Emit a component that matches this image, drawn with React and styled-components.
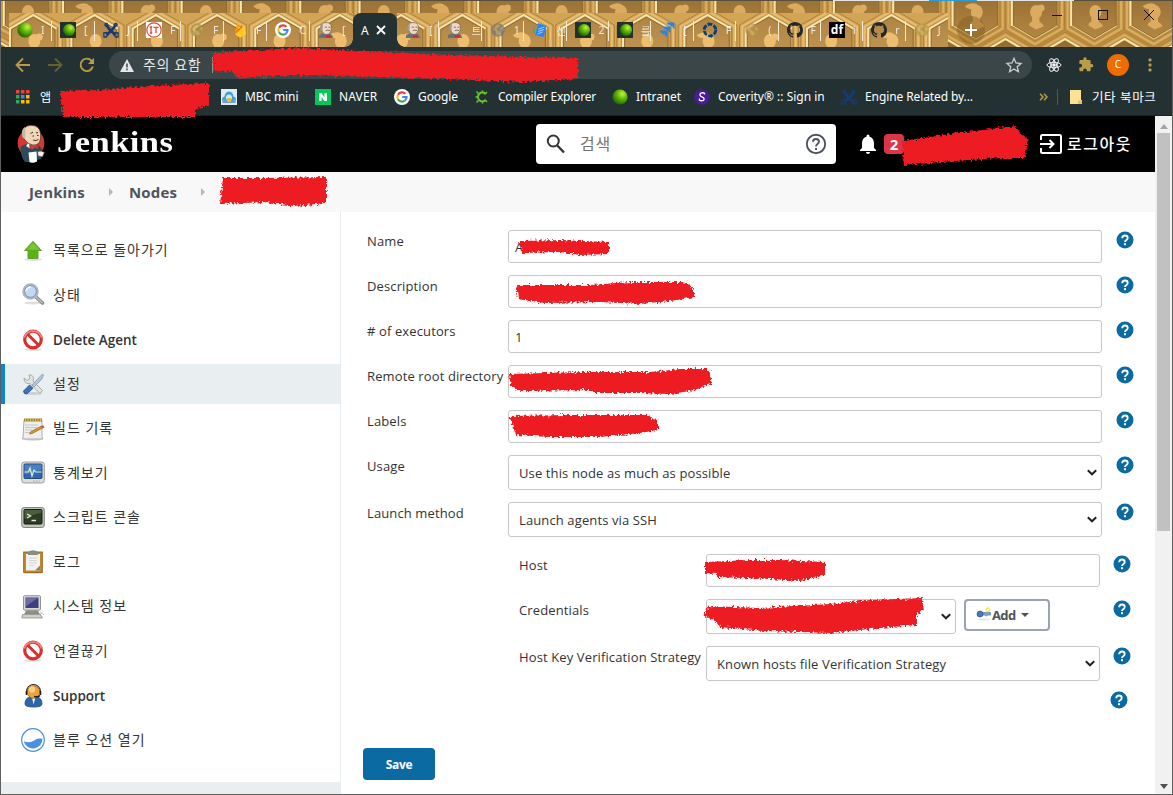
import React from "react";
import styled, { createGlobalStyle } from "styled-components";

const UI = `"Open Sans", "Noto Sans CJK KR", sans-serif`;
const CHROME = `"Noto Sans", "Noto Sans CJK KR", sans-serif`;

const Global = createGlobalStyle`
  * { box-sizing: border-box; }
  body { margin: 0; background: #fff; font-family: ${UI}; color: #333; overflow: hidden; }
  svg { display: block; flex: none; }
`;

const Window = styled.div`
  position: relative;
  width: 1173px;
  height: 795px;
  display: flex;
  flex-direction: column;
  overflow: hidden;
  border: 1px solid #5f5f5f;
  border-top: 0;
  background: #fff;
`;

/* ---------- browser frame ---------- */
const Frame = styled.div`
  position: relative;
  height: 47px;
  flex: none;
  display: flex;
  align-items: flex-end;
  padding-left: 8px;
`;
const FrameArt = styled.svg`
  position: absolute;
  inset: 0;
`;
const TopEdge = styled.div`
  position: absolute;
  left: 0;
  right: 0;
  top: 0;
  height: 1px;
  background: linear-gradient(90deg, #57503f 832px, #e4e4e4 832px 928px, #2e9bd0 928px 976px, #e4e4e4 976px 1073px, #57503f 1073px);
`;
const TabGroup = styled.div`
  position: relative;
  display: flex;
  flex: none;
  width: ${(p) => p.$w}px;
  height: 34px;
  z-index: 1;
`;
const TabBox = styled.div`
  position: relative;
  flex: 1 1 0;
  min-width: 0;
  display: flex;
  align-items: center;
  padding-left: 8px;
  gap: 8px;
  &::after {
    content: "";
    position: absolute;
    right: 0;
    top: 8px;
    width: 1px;
    height: 20px;
    background: ${(p) => (p.$last ? "transparent" : "#f6ecd6")};
  }
`;
const TabArt = styled.svg`
  position: absolute;
  left: 0;
  top: 0;
`;
const TabIcon = styled.span`
  position: relative;
  flex: none;
  opacity: ${(p) => (p.$dim ? 0.75 : 1)};
`;
const TabLetter = styled.span`
  font: 10.5px ${CHROME};
  color: #fff;
  opacity: 0.8;
`;
const ActiveTab = styled.div`
  position: relative;
  z-index: 2;
  flex: none;
  width: 44px;
  height: 34px;
  background: #243133;
  border-radius: 8px 8px 0 0;
  display: flex;
  align-items: center;
  gap: 7px;
  padding-left: 8px;
  color: #fff;
  font: 12px ${CHROME};
  &::before, &::after {
    content: "";
    position: absolute;
    bottom: 0;
    width: 8px;
    height: 8px;
  }
  &::before { left: -8px; background: radial-gradient(circle at 0 0, transparent 7.5px, #243133 8px); }
  &::after { right: -8px; background: radial-gradient(circle at 100% 0, transparent 7.5px, #243133 8px); }
`;
const NewTab = styled.div`
  position: relative;
  z-index: 1;
  width: 28px;
  height: 28px;
  margin: 0 0 3px 9px;
  border-radius: 50%;
  background: rgba(130, 92, 30, 0.45);
  display: grid;
  place-items: center;
`;
const Caption = styled.div`
  position: relative;
  z-index: 1;
  align-self: flex-start;
  display: flex;
  margin: 10px 18px 0 auto;
  gap: 36px;
`;

const Toolbar = styled.div`
  flex: none;
  height: 36px;
  background: #243133;
  display: flex;
  align-items: center;
  padding: 0 0 0 14px;
`;
const NavIcons = styled.div`
  display: flex;
  flex: none;
  gap: 16px;
  width: 94px;
`;
const Omnibox = styled.div`
  width: 923px;
  flex: none;
  height: 28px;
  border-radius: 14px;
  background: #3b4648;
  display: flex;
  align-items: center;
  padding: 0 9px 0 11px;
  color: #e6e8e8;
  font: 14px ${UI};
  letter-spacing: 0.6px;
  span { margin: -2px 0 0 9px; width: 62px; white-space: nowrap; }
  i { width: 1px; height: 16px; margin-left: 7px; background: #8c9394; }
  svg:last-child { margin-left: auto; }
`;
const Actions = styled.div`
  display: grid;
  grid-template-columns: repeat(4, 32px);
  justify-items: center;
  align-items: center;
  margin-left: 6px;
`;
const Avatar = styled.span`
  width: 22px;
  height: 22px;
  border-radius: 50%;
  background: #ef6c00;
  color: #fff;
  font: 10px/21px ${CHROME};
  text-align: center;
`;
const Bookmarks = styled.div`
  flex: none;
  height: 33px;
  background: #243133;
  border-bottom: 1px solid #1a2224;
  display: flex;
  align-items: center;
  padding: 0 0 5px 15px;
  font: 12px ${CHROME};
  color: #fff;
`;
const Bookmark = styled.div`
  width: ${(p) => p.$w}px;
  flex: none;
  display: flex;
  align-items: center;
  gap: ${(p) => p.$gap || 8}px;
  white-space: nowrap;
  font-size: ${(p) => p.$fs || 12}px;
  letter-spacing: ${(p) => p.$ls || 0}px;
`;
const Divider = styled.span`
  width: 1px;
  height: 16px;
  margin: 0 11px 0 9px;
  background: #5f5a3c;
`;

/* ---------- page ---------- */
const Viewport = styled.div`
  flex: 1;
  display: flex;
  min-height: 0;
`;
const Page = styled.div`
  flex: 1;
  min-width: 0;
  display: flex;
  flex-direction: column;
`;
const Header = styled.header`
  height: 56px;
  flex: none;
  background: #000;
  display: flex;
  align-items: center;
  padding: 0 23px 0 16px;
  color: #fff;
`;
const Brand = styled.span`
  margin: -4px 0 0 11px;
  width: 479px;
  font: bold 30px "Liberation Serif", serif;
  letter-spacing: 0.4px;
  span { display: inline-block; transform: scaleX(1.15); transform-origin: 0 50%; }
`;
const Search = styled.div`
  width: 300px;
  height: 40px;
  background: #fff;
  border-radius: 4px;
  display: flex;
  align-items: center;
  padding: 0 8px;
  color: #757575;
  font-size: 16px;
  letter-spacing: 0.9px;
  span { flex: 1; margin: -2px 0 0 12px; }
`;
const Alerts = styled.div`
  display: flex;
  align-items: center;
  gap: 4px;
  margin-left: 20px;
`;
const Badge = styled.span`
  width: 20px;
  height: 20px;
  border-radius: 4px;
  background: #dc3545;
  font: bold 15px/20px ${UI};
  text-align: center;
`;
const Logout = styled.span`
  display: flex;
  align-items: center;
  gap: 5px;
  margin-left: auto;
  font-size: 16px;
  font-weight: 500;
  letter-spacing: 1.5px;
  span { margin-top: -3px; }
`;
const Crumbs = styled.nav`
  height: 40px;
  flex: none;
  background: #f8f8f8;
  display: flex;
  align-items: center;
  padding: 0 0 1px 28px;
  color: #4d545d;
  font: bold 15px ${UI};
`;
const Crumb = styled.span`
  width: ${(p) => p.$w}px;
  letter-spacing: 0.15px;
`;
const Arrow = styled.span`
  width: 0;
  height: 0;
  border: 4px solid transparent;
  border-left-color: #b5b8bb;
  border-right-width: 0;
  margin-right: ${(p) => p.$mr}px;
`;
const Body = styled.div`
  flex: 1;
  display: flex;
  min-height: 0;
`;
const Side = styled.aside`
  width: 340px;
  flex: none;
  border-right: 1px solid #e6ecef;
  display: flex;
  flex-direction: column;
  padding-top: 18.5px;
`;
const Task = styled.div`
  height: 40px;
  margin-bottom: 4.5px;
  flex: none;
  display: flex;
  align-items: center;
  gap: 8px;
  padding-left: 16px;
  border-left: 4px solid ${(p) => (p.$on ? "#0b87d1" : "transparent")};
  background: ${(p) => (p.$on ? "#e9eef1" : "transparent")};
  font-size: ${(p) => (p.$latin ? 13.5 : 14)}px;
  font-weight: ${(p) => (p.$latin ? 600 : 400)};
  letter-spacing: ${(p) => (p.$latin ? 0 : 1)}px;
  span { padding: ${(p) => (p.$latin ? "1px 0 0" : "0 0 3px")}; }
`;
const SideFoot = styled.div`
  margin-top: auto;
  height: 12px;
  flex: none;
  background: #e9eef1;
`;
const Form = styled.main`
  flex: 1;
  padding: 18px 0 0 26px;
`;
const Row = styled.div`
  display: grid;
  grid-template-columns: ${(p) => (p.$nested ? "187px 394px 31px" : "141px 594px 32px")};
  justify-content: start;
  margin: ${(p) => p.$mt || 0}px 0 12px ${(p) => (p.$nested ? 152 : 0)}px;
  & > svg { margin: 1px 0 0 auto; }
`;
const Label = styled.label`
  padding-top: 2px;
  font-size: 13px;
  line-height: 18px;
  white-space: nowrap;
  letter-spacing: 0.12px;
`;
const Field = styled.div`
  height: ${(p) => (p.$select ? 35 : 33)}px;
  width: ${(p) => (p.$w ? p.$w + "px" : "auto")};
  border: 1px solid #c6c6c6;
  border-radius: 3px;
  background: #fff;
  display: flex;
  align-items: center;
  justify-content: space-between;
  padding: 1px ${(p) => (p.$select ? "3px 0 10px" : "6px 0 6px")};
  font-size: 13px;
  letter-spacing: 0.12px;
`;
const Inline = styled.div`
  display: flex;
  gap: 8px;
`;
const AddButton = styled.button`
  width: 86px;
  height: 32px;
  border: 2px solid #98a4ae;
  border-radius: 4px;
  background: #fff;
  color: #4d545d;
  font: bold 13px ${UI};
  letter-spacing: -0.6px;
  display: flex;
  align-items: center;
  padding: 0 0 0 10px;
  i { margin: -1px 0 0 5px; border: 4px solid transparent; border-top-color: #4d545d; border-bottom: 0; }
`;
const LoneHelp = styled.div`
  display: flex;
  margin-top: -2px;
  padding-left: 743px;
`;
const Save = styled.button`
  display: block;
  width: 72px;
  height: 32px;
  margin: 39px 0 0 -4px;
  border: 0;
  border-radius: 4px;
  background: #0b6aa2;
  color: #fff;
  font: bold 12px ${UI};
  letter-spacing: -0.35px;
`;
const Scroll = styled.div`
  width: 17px;
  flex: none;
  background: #f1f1f1;
  display: flex;
  flex-direction: column;
  align-items: center;
  padding: 8px 0 5px;
`;
const Thumb = styled.div`
  width: 13px;
  height: 398px;
  margin: 4px 0 auto;
  background: #c1c1c1;
`;
const Overlay = styled.svg`
  position: absolute;
  left: -1px;
  top: 0;
  pointer-events: none;
  z-index: 5;
`;

/* ---------- artwork ---------- */
const hex = (cx, cy, r) =>
  [0, 1, 2, 3, 4, 5]
    .map((k) => {
      const a = (Math.PI / 180) * (60 * k - 90);
      return `${(cx + r * Math.cos(a)).toFixed(1)},${(cy + r * Math.sin(a)).toFixed(1)}`;
    })
    .join(" ");

const Cell = ({ x, y, v, light }) => (
  <g>
    <polygon points={hex(x, y, 34)} fill={light ? "#d3a65a" : "#c5964a"} stroke="#b08039" strokeWidth="1" />
    <polygon points={hex(x, y, 31)} fill="none" stroke={light ? "#e6bd72" : "#dbae62"} strokeWidth="2" />
    <polygon points={hex(x, y, 28)} fill="none" stroke="#b3853e" strokeWidth="1.5" />
    <polygon points={hex(x, y, 25)} fill={light ? "url(#cellLight)" : "url(#cellDark)"} stroke="#8f6a31" strokeWidth="1" />
    <path d={`M${x - 23.300} ${y + 13}V${y - 13.500}L${x} ${y - 27}L${x + 23.300} ${y - 13.500}`} fill="none" stroke="#f7e6ac" strokeWidth="2" />
    <path d={`M${x - 22} ${y + 13}L${x} ${y + 26}L${x + 22} ${y + 13}`} fill="none" stroke="#ecd08a" strokeWidth="1" />
    <g fill={light ? "#edbe6f" : "#dcab5f"}>
      <ellipse cx={x + 1} cy={y - 1} rx="6" ry="7" />
      <path d={`M${x - 3} ${y + 3}h7l.5 6q4 2 4 4.500l-7.500 3-7-4q0-3 3-4z`} />
      {v % 3 === 1 && <path d={`M${x - 11} ${y - 7}q6-4 12-2l5 5h-8q-6 1-9-3z`} />}
      {v % 3 === 2 && <circle cx={x + 6} cy={y - 5} r="3.500" />}
    </g>
  </g>
);

const FrameBackground = () => (
  <FrameArt width="1171" height="47" viewBox="1 0 1171 47">
    <defs>
      <linearGradient id="cellDark" x1="0" y1="0" x2="0" y2="1">
        <stop offset="0" stopColor="#936c32" />
        <stop offset="1" stopColor="#b38643" />
      </linearGradient>
      <linearGradient id="cellLight" x1="0" y1="0" x2="0" y2="1">
        <stop offset="0" stopColor="#b08443" />
        <stop offset="1" stopColor="#c69a55" />
      </linearGradient>
    </defs>
    <rect width="1173" height="47" fill="#c2923f" />
    {Array.from({ length: 21 }, (_, i) => (
      <Cell key={"b" + i} x={i * 59.500 - 6} y={66} v={i} />
    ))}
    {Array.from({ length: 20 }, (_, i) => (
      <Cell key={"a" + i} x={i * 59.300 + 27} y={13} v={i} />
    ))}
  </FrameArt>
);

const TabBackground = ({ x, w }) => (
  <TabArt width={w} height="34" viewBox={`${x} 13 ${w} 34`}>
    <rect x={x} y="13" width={w} height="34" fill="#d2a556" />
    {Array.from({ length: 18 }, (_, i) => (
      <Cell key={i} x={i * 61.300 - 28} y={42} v={i + 1} light />
    ))}
  </TabArt>
);

const Ball = ({ box }) => (
  <svg width="16" height="16" viewBox="0 0 16 16">
    <defs>
      <radialGradient id="ball" cx=".65" cy=".3" r=".75">
        <stop offset="0" stopColor="#c5f23a" />
        <stop offset=".45" stopColor="#62b80a" />
        <stop offset="1" stopColor="#1c5d04" />
      </radialGradient>
    </defs>
    {box && <rect width="16" height="16" fill="#22302f" />}
    <circle cx={box ? 9 : 8} cy="8" r={box ? 6 : 7.6} fill="url(#ball)" />
  </svg>
);
const Confluence = () => (
  <svg width="16" height="16" viewBox="0 0 16 16" fill="none" stroke="#153a73">
    <path d="M3.500 2.500C5 7 9 10 12.500 13M12.500 2.500C11 7 7 10 3.500 13" strokeWidth="2.700" />
    <circle cx="3.300" cy="2.800" r="1.300" strokeWidth="1.500" />
    <circle cx="12.700" cy="2.800" r="1.300" strokeWidth="1.500" />
    <path d="M.8 11l3-.5 1.500 2-2 2.500H1zM15.200 11l-3-.5-1.500 2 2 2.500H15z" strokeWidth="1.300" />
  </svg>
);
const ItIcon = () => (
  <svg width="16" height="16" viewBox="0 0 16 16">
    <rect width="16" height="16" fill="#fff" />
    <circle cx="8" cy="8" r="7.200" fill="none" stroke="#db4a35" strokeWidth="1.200" />
    <path d="M5 5v6M3.800 5h2.400M3.800 11h2.400M7.500 5.300h5M10 5v6.300" stroke="#db4a35" strokeWidth="1.300" />
  </svg>
);
const Globe = ({ c, land }) => (
  <svg width="16" height="16" viewBox="0 0 16 16">
    <circle cx="8" cy="8" r="6.800" fill={c} />
    <path d="M7 2.500l3 .5-1 2-2 1-.5 2 3 1.500 1.500 2-2 2-2.500-1L6 9.500 3 8l1-3zM11.500 5l2 1v3l-2-1z" fill={land} />
  </svg>
);
const Firebase = () => (
  <svg width="16" height="16" viewBox="0 0 16 16">
    <path d="M3 12L5 1.500q.3-.8.800-.1L7.500 4 3 12z" fill="#ffa000" />
    <path d="M3 12.300L9 3.500q.4-.6.800 0l1 2L3 12.300z" fill="#f57c00" />
    <path d="M3 12.400L12 4q.6-.4.700.3l1.500 8-5 3q-1 .4-2 0z" fill="#ffca28" />
  </svg>
);
const Google = () => (
  <svg width="16" height="16" viewBox="0 0 16 16" fill="none" strokeWidth="2.100">
    <circle cx="8" cy="8" r="8" fill="#fff" />
    <path d="M11.400 4.900A4.600 4.600 0 0 0 4 5.700" stroke="#ea4335" />
    <path d="M4 5.700a4.600 4.600 0 0 0 0 4.600" stroke="#fbbc05" />
    <path d="M4 10.300a4.600 4.600 0 0 0 7 1.200" stroke="#34a853" />
    <path d="M11 11.500A4.500 4.500 0 0 0 12.600 8H8.200" stroke="#4285f4" />
  </svg>
);
const Butler = () => (
  <svg width="16" height="16" viewBox="0 0 16 16">
    <path d="M1 16v-2.500Q2 12 5 11.500h6q4 1 4 4.500z" fill="#66707c" />
    <path d="M3 6C2.500 2 4.500.6 8 .6S13.500 2 13.300 6c.2 4-1.800 6.300-4.800 6.500C5.500 12.300 3.800 10 3 6z" fill="#efd9c6" stroke="#6b5a50" strokeWidth=".7" />
    <path d="M2.700 8.500C1.500 4 2.800 2 5 1.300L4.700 5l-.2 4z" fill="#a39a90" />
    <path d="M6.800 5.200h2M10.500 5.200h1.700M7.800 8.600q2-1 4.200 0" stroke="#5b4f47" strokeWidth=".8" fill="none" />
    <path d="M8 13l2.200.9L12.500 13v2.800l-2.300-.8-2.200.8z" fill="#d3222b" />
  </svg>
);
const Sheets = () => (
  <svg width="16" height="16" viewBox="0 0 16 16">
    <path d="M2 3l-1 7 3 4z" fill="#ea4a86" />
    <path d="M3 2L2 10l3 4z" fill="#3fbf62" />
    <path d="M6 1l8.500 3-3 11L3.500 13z" fill="#2684fc" />
    <path d="M6.500 7l6-2M6 9.500l6-2M5.500 12l5-2" stroke="#a9d0ff" strokeWidth="1" />
  </svg>
);
const Jira = () => (
  <svg width="16" height="16" viewBox="0 0 16 16" fill="#2b83ea">
    <path d="M7.500 .5H15.500V7l-2-1.500V3.800L12 4.800 11 2.800H9.300z" />
    <path d="M4 4.500h7.500V11L9.700 9.700V8L8 9 7 7H5.500z" />
    <path d="M.5 8.500H8V15l-1.800-1.300V12L4.500 13l-1-2H2z" />
  </svg>
);
const Ring = () => (
  <svg width="16" height="16" viewBox="0 0 16 16" fill="none">
    <circle cx="8" cy="8" r="5.800" stroke="#0e3c78" strokeWidth="2.800" strokeDasharray="4.700 1.370" />
    <path d="M6 0l3 2-3 2M10 12l-3 2 3 2" fill="#0e3c78" />
  </svg>
);
const Github = () => (
  <svg width="16" height="16" viewBox="0 0 16 16">
    <path fill="#22282f" d="M8 0C3.580 0 0 3.580 0 8c0 3.540 2.290 6.530 5.470 7.590.4.070.550-.170.550-.380 0-.190-.010-.820-.010-1.490-2.010.370-2.530-.490-2.690-.940-.090-.230-.480-.940-.820-1.130-.280-.150-.680-.520-.010-.530.630-.010 1.080.580 1.230.820.720 1.210 1.870.870 2.330.660.070-.520.280-.870.510-1.070-1.780-.2-3.640-.890-3.640-3.950 0-.870.310-1.590.820-2.150-.080-.2-.360-1.020.080-2.120 0 0 .670-.210 2.200.820.640-.180 1.320-.270 2-.270s1.360.090 2 .270c1.530-1.040 2.200-.820 2.200-.820.440 1.100.160 1.920.080 2.120.510.560.820 1.270.820 2.150 0 3.070-1.870 3.750-3.650 3.950.290.250.540.730.540 1.480 0 1.070-.010 1.930-.010 2.200 0 .210.150.460.550.380A8.010 8.010 0 0 0 16 8c0-4.420-3.580-8-8-8z" />
  </svg>
);
const DfBox = styled.span`
  display: block;
  width: 16px;
  height: 16px;
  background: #000;
  color: #fff;
  font: bold 12px/15px ${UI};
  text-align: center;
`;

const before = [
  [<Ball />, "I"], [<Ball box />, "["], [<Confluence />, "J"], [<ItIcon />, "F"],
  [<Globe c="#a8924a" land="#cfae62" />, "F"], [<Firebase />, "F"], [<Google />, "C"], [<Butler />, "["],
];
const after = [
  [<Butler />, "["], [<Butler />, "트"], [<Globe c="#74777c" land="#b0935d" />, "1"], [<Sheets />, "신"],
  [<Ball box />, "2"], [<Ball box />, "를"], [<Jira />, "["], [<Ring />, "F"],
  [<Globe c="#b5924a" land="#d5b168" />, "("], [<Github />, "F"], [<DfBox>df</DfBox>, "i"], [<Github />, "r"],
  [<Globe c="#b09a48" land="#d1b366" />, "J"],
];
const Tabs = ({ items, x, w }) => (
  <TabGroup $w={w}>
    <TabBackground x={x} w={w} />
    {items.map(([icon, t], i) => (
      <TabBox key={i} $last={i === items.length - 1}>
        <TabIcon $dim={icon.type === Globe}>{icon}</TabIcon>
        <TabLetter>{t}</TabLetter>
      </TabBox>
    ))}
  </TabGroup>
);

const AppsGrid = () => (
  <svg width="14" height="14" viewBox="0 0 14 14">
    {["#ea4335", "#ea4335", "#ea4335", "#34a853", "#4285f4", "#fbbc05", "#34a853", "#fbbc05", "#fbbc05"].map((c, i) => (
      <rect key={i} x={(i % 3) * 5} y={Math.floor(i / 3) * 5} width="3.500" height="3.500" fill={c} />
    ))}
  </svg>
);
const Mbc = () => (
  <svg width="16" height="16" viewBox="0 0 16 16">
    <rect width="16" height="16" fill="#dfe9f7" />
    <path d="M1 11q0-3 2.500-3.500Q4 3 8 2.500q4 .5 4.500 5Q15 8 15 11z" fill="#3aa0d8" />
    <rect x="1.500" y="10.500" width="13" height="3.500" fill="#6f9fc4" />
    <circle cx="8" cy="8.500" r="3" fill="#d8e8ee" />
    <rect x="6" y="9" width="4" height="4" fill="#e7b94b" />
  </svg>
);
const Naver = () => (
  <svg width="16" height="16" viewBox="0 0 16 16">
    <rect width="16" height="16" fill="#03c75a" />
    <path d="M4 12V4.300h2.700l2.700 3.900V4.300H12V12H9.400L6.600 8.100V12z" fill="#fff" />
  </svg>
);
const Gear = () => (
  <svg width="16" height="16" viewBox="0 0 16 16" fill="none" stroke="#67c52a">
    <path d="M11.800 5.300A4.400 4.400 0 1 0 11.800 10.700" strokeWidth="2" />
    <path d="M4.500 4.500L2.500 2.500M4.500 11.500L2.500 13.500M8.500 3.500V1.500M8.500 12.500V14.500M4 8H1.500M11.500 4.500l1.500-1.500M11.500 11.500l1.500 1.500" strokeWidth="1.600" />
  </svg>
);
const Coverity = () => (
  <svg width="16" height="16" viewBox="0 0 16 16">
    <circle cx="8" cy="8" r="7.800" fill="#4a1b9a" />
    <path d="M10.500 5.600V4.300Q8.500 3.200 6.700 4.200 5 6 7 7.400L9.500 8.800q1.300 1.500-.3 2.700-2 .7-3.800-.4V9.600" stroke="#fff" strokeWidth="1.300" fill="none" />
  </svg>
);

const Help = () => (
  <svg width="18" height="18" viewBox="0 0 18 18">
    <circle cx="9" cy="9" r="8.500" fill="#0b6aa2" />
    <path d="M6.200 7.200Q6.300 4.500 9 4.500t2.700 2.400q0 1.200-1.300 2.100Q9 9.900 9 11.100" fill="none" stroke="#fff" strokeWidth="1.800" />
    <rect x="8" y="12.200" width="2" height="2" fill="#fff" />
  </svg>
);
const Chevron = () => (
  <svg width="12" height="12" viewBox="0 0 12 12">
    <path d="M1.800 3.300L6 7.300 10.200 3.300" fill="none" stroke="#222" strokeWidth="2" />
  </svg>
);

const Logo = () => (
  <svg width="29" height="40" viewBox="0 0 29 40">
    <ellipse cx="14" cy="19" rx="13.300" ry="14" fill="#d33833" />
    <path d="M3.500 23q2-2 6-3l10 1q5 1 5.500 6l-1 8-4 1-1 2H8q-5-6-4.500-15z" fill="#2d4b5c" />
    <path d="M12 18l-3 4 5 3 6-2 1-4z" fill="#fff" />
    <path d="M6 13Q4 2 14 1.200 22.500 1.500 23.500 9q.8 7-1.500 10-3 2.500-6.500 2-5-1-7.500-5z" fill="#f0d6b7" stroke="#3b332e" strokeWidth=".7" />
    <path d="M5.500 13.500Q3.500 5 8 3l.5 4-.5 8z" fill="#c3b6a8" />
    <path d="M13.500 9.500l2.500-1.300M19 9l2-.5M15.500 12h1.500M20 11.500h1.500M16 16q3 1.500 5.500-.5" stroke="#3b332e" fill="none" />
    <path d="M12.500 20.500l4.500 1.200 4-1.400.7 5-4.700-1.800-4 2z" fill="#d33833" stroke="#81221f" strokeWidth=".5" />
    <path d="M11.500 28.500l8-1 .5 10q-4 2-7.500.8z" fill="#fff" />
    <path d="M20.500 27.500q4-1.500 7 1l-2 4.500-4.500-1z" fill="#eee" stroke="#3b332e" strokeWidth=".6" />
  </svg>
);

const icon24 = (children) => (
  <svg width="24" height="24" viewBox="0 0 24 24">{children}</svg>
);
const Shadow = ({ cy = 20.500 }) => <ellipse cx="12" cy={cy} rx="9" ry="1.500" fill="#000" opacity=".13" />;
const UpArrow = () => icon24(
  <>
    <Shadow cy={20.500} />
    <path d="M12 2.300L20.500 11.500H17V19.500H7V11.500H3.500z" fill="#58b313" stroke="#5c9d32" strokeWidth=".9" />
    <path d="M12 3.800L18.500 10.700H8V16V10.700H5.700z" fill="#8fd04d" opacity=".6" />
  </>
);
const Magnifier = () => icon24(
  <>
    <Shadow cy={20} />
    <path d="M15 14L21.500 20" stroke="#8a8a8a" strokeWidth="3.600" strokeLinecap="round" />
    <path d="M15 14L21.500 20" stroke="#c4c4c4" strokeWidth="1.300" />
    <circle cx="9.500" cy="8.500" r="7.300" fill="#c2d9f3" stroke="#b4b4b4" strokeWidth="1.800" />
    <circle cx="9.500" cy="8.500" r="5.900" fill="none" stroke="#688fc5" strokeWidth="1" />
    <path d="M5 8q1-4 5-4" stroke="#f3f8ff" strokeWidth="1.500" fill="none" />
  </>
);
const Prohibit = () => icon24(
  <>
    <Shadow cy={21.500} />
    <circle cx="12" cy="11.500" r="8.300" fill="#fff" stroke="#d9302f" strokeWidth="3.200" />
    <path d="M6.500 6L17.500 17" stroke="#d9302f" strokeWidth="3" />
    <path d="M3.400 9.500A9 9 0 0 1 20.600 9.500" fill="none" stroke="#ef8682" strokeWidth="1.600" />
  </>
);
const Tools = () => icon24(
  <>
    <Shadow cy={21.500} />
    <path d="M3 6l3 2.500L9 6.500 8 3q4-.5 4.500 3.500l-.5 2.500L21.500 18.500 19 21.500 9 11.500q-6 1-6-5.500z" fill="#e2e4e1" stroke="#9a9c99" strokeWidth=".8" />
    <path d="M21.500 2l1 1-1.500 4-8 8-2-2 7.500-8z" fill="#b4c6dc" stroke="#8093aa" strokeWidth=".7" />
    <path d="M2.500 19L8.500 13l3.500 3.200-6 5.800q-3.500.5-3.500-3z" fill="#3d71b5" stroke="#23508e" strokeWidth=".8" />
  </>
);
const Notepad = () => icon24(
  <>
    <Shadow cy={22.500} />
    <path d="M3 3h18v17l1 2H1.500l.5-2z" fill="#efefee" stroke="#999" strokeWidth=".8" />
    <rect x="3" y="1.500" width="18" height="3" fill="#9e8329" />
    <path d="M4.500 1.500v3M7 1.500v3M9.500 1.500v3M12 1.500v3M14.500 1.500v3M17 1.500v3M19.500 1.500v3" stroke="#ddc66d" />
    <path d="M4 8h13M4 10.500h12M4 13h7M4 15.500h5" stroke="#c6c6c4" />
    <path d="M8.500 17l1.500-2.500 10.500-5.500 1.200 2-10.500 5.500z" fill="#d99632" stroke="#80561e" strokeWidth=".6" />
    <path d="M20.500 9l1.500-.7 1.500 2-1.500 1z" fill="#d43e3e" />
  </>
);
const Monitor = () => icon24(
  <>
    <rect x=".7" y="1" width="22.600" height="21" rx="2.500" fill="#dcdcda" stroke="#9d9d99" />
    <rect x="3" y="3" width="18" height="14.500" rx="1" fill="#2f69b3" stroke="#264a7d" />
    <path d="M3.500 3.500h17v5L3.500 13.500z" fill="#5b8fd0" opacity=".6" />
    <path d="M3.500 11h4l1.500-4 2 8 2-6 1.500 2h6" stroke="#dff0c4" fill="none" strokeWidth="1.200" />
    <path d="M12 20h7" stroke="#b2b2ae" strokeDasharray="2 1" />
  </>
);
const Terminal = () => icon24(
  <>
    <rect x=".7" y="1.500" width="22.600" height="20" rx="2.500" fill="#c1c3bd" stroke="#81837d" />
    <rect x="3" y="3.500" width="18" height="14.500" rx="1" fill="#2b3d22" stroke="#151a12" />
    <path d="M3.500 4h17v3q-9 1-17 6z" fill="#5d754b" opacity=".6" />
    <path d="M6 8l3.500 2L6 12M10.500 14.500H15" stroke="#e4eddc" strokeWidth="1.400" fill="none" />
  </>
);
const Clipboard = () => icon24(
  <>
    <Shadow cy={23} />
    <rect x="2.700" y="2" width="18.600" height="20.500" fill="#c68827" stroke="#94621a" strokeWidth=".9" />
    <path d="M5 4h14V20.500H5z" fill="#f2f2f1" />
    <path d="M8 8h8M8 10.500h8M8 13h8M8 15.500h5" stroke="#d6d7d6" />
    <path d="M7 3V2q2-1.800 5-1.800T17 2v3H7z" fill="#8b8c88" />
    <path d="M19 15.500v5h-5z" fill="#83847f" />
  </>
);
const Computer = () => icon24(
  <>
    <rect x="2.500" y=".7" width="17" height="14.500" rx="1" fill="#d7d7d3" stroke="#94948f" />
    <rect x="4.500" y="2.500" width="13" height="10.500" fill="#3d3f80" />
    <path d="M4.500 2.500h13l-13 9z" fill="#7b7db0" opacity=".75" />
    <path d="M5 15.500h12l2 4H3z" fill="#8c8d89" />
    <path d="M1.500 19.500h18l2 3.500H.8z" fill="#cfcfca" stroke="#8f908b" strokeWidth=".8" />
    <path d="M19 18q3 0 4 2" stroke="#b9b9b5" fill="none" />
  </>
);
const Support = () => icon24(
  <>
    <path d="M4 20q0-6 5-7h7q5 1 5 7 0 3-8.500 3T4 20z" fill="#2e66aa" stroke="#1e437a" strokeWidth=".8" />
    <path d="M11 13.500l1.500 7 2-7z" fill="#eef3f8" />
    <circle cx="12.500" cy="8" r="6.300" fill="#eda234" stroke="#9c6314" strokeWidth=".8" />
    <circle cx="11" cy="5.500" r="3.200" fill="#f9cd82" />
    <path d="M5.500 10V7.500a7 7 0 0 1 14 0V10" fill="none" stroke="#333" strokeWidth="1.100" />
    <path d="M5.500 7v4M19.500 7v4M19 11.500q-2 2-6 1" stroke="#222" strokeWidth="1.600" fill="none" />
  </>
);
const Ocean = () => icon24(
  <>
    <circle cx="12" cy="12" r="11.300" fill="#fff" stroke="#4a90e2" strokeWidth="1.200" />
    <path d="M2.700 13Q5 14.500 8 14.300 11.500 14 14 12T21.500 10.800A9.500 9.500 0 0 1 2.700 13z" fill="#4a90e2" />
  </>
);

const tasks = [
  [UpArrow, "목록으로 돌아가기"], [Magnifier, "상태"], [Prohibit, "Delete Agent", 1], [Tools, "설정"],
  [Notepad, "빌드 기록"], [Monitor, "통계보기"], [Terminal, "스크립트 콘솔"], [Clipboard, "로그"],
  [Computer, "시스템 정보"], [Prohibit, "연결끊기"], [Support, "Support", 1], [Ocean, "블루 오션 열기"],
];

const scribbles = [
  "213,53 240,51 300,48 380,52 450,55 520,57 578,58 578,79 520,82 450,79 380,77 300,75 238,78 233,72 214,71",
  "60,91 100,90 150,86 209,83 209,106 196,108 196,117 63,117",
  "902,141 950,134 1016,126 1020,134 1028,138 1025,158 1000,158 955,161 904,165",
  "223,178 265,178 326,177 326,203 295,206 265,202 220,204",
  "520,241 560,240 609,242 609,254 580,255 560,252 522,253",
  "516,285 590,285 630,282 682,282 691,285 695,297 670,301 640,304 600,302 545,303 518,299",
  "509,374 580,372 650,372 680,369 709,369 712,384 690,391 670,394 640,393 592,393 592,390 520,391 511,386",
  "509,416 570,415 649,415 652,419 658,420 658,430 640,433 600,437 550,437 516,435",
  "705,562 750,560 780,560 825,562 825,575 800,581 770,579 717,577 717,574 705,573",
  "703,615 709,606 760,608 830,604 870,600 922,598 924,610 917,614 917,625 880,628 830,633 765,631 720,627 717,622",
];

export default function App() {
  return (
    <>
      <Global />
      <Window>
        <Frame>
          <FrameBackground />
          <TopEdge />
          <Tabs items={before} x={9} w={344} />
          <ActiveTab>
            A
            <svg width="10" height="10" viewBox="0 0 10 10"><path d="M1 1l8 8M9 1l-8 8" stroke="#fff" strokeWidth="1.800" /></svg>
          </ActiveTab>
          <Tabs items={after} x={397} w={551} />
          <NewTab>
            <svg width="14" height="14" viewBox="0 0 14 14"><path d="M7 1v12M1 7h12" stroke="#fff" strokeWidth="2" /></svg>
          </NewTab>
          <Caption>
            <svg width="10" height="10" viewBox="0 0 10 10"><path d="M0 5.500h10" stroke="#111" /></svg>
            <svg width="10" height="10" viewBox="0 0 10 10"><rect x=".5" y=".5" width="9" height="9" fill="none" stroke="#111" /></svg>
            <svg width="10" height="10" viewBox="0 0 10 10"><path d="M0 0l10 10M10 0L0 10" stroke="#111" /></svg>
          </Caption>
        </Frame>

        <Toolbar>
          <NavIcons>
            <svg width="16" height="16" viewBox="0 0 16 16" fill="none" stroke="#b89c47" strokeWidth="1.800"><path d="M8 1.500L1.500 8 8 14.500M1.500 8H15" /></svg>
            <svg width="16" height="16" viewBox="0 0 16 16" fill="none" stroke="#66602f" strokeWidth="1.800"><path d="M8 1.500L14.500 8 8 14.500M14.500 8H1" /></svg>
            <svg width="16" height="16" viewBox="0 0 16 16" fill="none" stroke="#b89c47" strokeWidth="1.900"><path d="M13.800 9.500A6.200 6.200 0 1 1 12.500 3.800L14.200 6" /><path d="M15 .8V7H9z" fill="#b89c47" stroke="none" /></svg>
          </NavIcons>
          <Omnibox>
            <svg width="14" height="13" viewBox="0 0 14 13"><path d="M7 0l7 13H0z" fill="#e6e8e8" /><path d="M7 4.500v4M7 9.500v1.700" stroke="#3b4648" strokeWidth="1.500" /></svg>
            <span>주의 요함</span>
            <i />
            <svg width="18" height="18" viewBox="0 0 18 18"><path d="M9 2.300l2 4.700 5 .4-3.800 3.300 1.200 5L9 13l-4.400 2.700 1.200-5L2 7.400 7 7z" fill="none" stroke="#ccd0d0" strokeWidth="1.300" /></svg>
          </Omnibox>
          <Actions>
            <svg width="16" height="16" viewBox="0 0 16 16" fill="none" stroke="#f1f1f1" strokeWidth="1">
              <circle cx="8" cy="8" r="1.300" fill="#fff" />
              <ellipse cx="8" cy="8" rx="7" ry="2.700" /><ellipse cx="8" cy="8" rx="7" ry="2.700" transform="rotate(60 8 8)" /><ellipse cx="8" cy="8" rx="7" ry="2.700" transform="rotate(120 8 8)" />
            </svg>
            <svg width="16" height="16" viewBox="1 0 24 24" fill="#b89c47"><path d="M20.500 11H19V7c0-1.100-.9-2-2-2h-4V3.500a2.500 2.500 0 0 0-5 0V5H4c-1.100 0-2 .9-2 2v3.800h1.500a2.700 2.700 0 0 1 0 5.400H2V20c0 1.100.9 2 2 2h3.800v-1.500a2.700 2.700 0 0 1 5.400 0V22H17c1.100 0 2-.9 2-2v-4h1.500a2.500 2.500 0 0 0 0-5z" transform="translate(1 -.5)" /></svg>
            <Avatar>C</Avatar>
            <svg width="16" height="16" viewBox="0 0 16 16" fill="#b89c47"><rect x="6.500" y="1.500" width="3" height="3" rx="1" /><rect x="6.500" y="6.500" width="3" height="3" rx="1" /><rect x="6.500" y="11.500" width="3" height="3" rx="1" /></svg>
          </Actions>
        </Toolbar>

        <Bookmarks>
          <Bookmark $w={205} $gap={10}><AppsGrid /><span>앱</span></Bookmark>
          <Bookmark $w={94} $ls={-0.1}><Mbc />MBC mini</Bookmark>
          <Bookmark $w={79} $ls={0.15}><Naver />NAVER</Bookmark>
          <Bookmark $w={80} $ls={-0.1}><Google />Google</Bookmark>
          <Bookmark $w={138} $ls={-0.22}><Gear />Compiler Explorer</Bookmark>
          <Bookmark $w={82} $ls={-0.1}><Ball />Intranet</Bookmark>
          <Bookmark $w={147}><Coverity />Coverity® :: Sign in</Bookmark>
          <Bookmark $w={198} $ls={-0.1}><Confluence />Engine Related by...</Bookmark>
          <svg width="9" height="8" viewBox="0 0 9 8"><path d="M1 .8L4 4 1 7.200M5 .8L8 4 5 7.200" fill="none" stroke="#b89c47" strokeWidth="1.500" /></svg>
          <Divider />
          <Bookmark $w={90} $fs={12.5} $ls={0.6} $gap={9}>
            <svg width="14" height="14" viewBox="0 0 14 14"><path d="M1 0h11v10h1v4H1z" fill="#fde293" /><path d="M9 14v-3.500h4V14z" fill="#e5c15d" /></svg>
            기타 북마크
          </Bookmark>
        </Bookmarks>

        <Viewport>
          <Page>
            <Header>
              <Logo />
              <Brand><span>Jenkins</span></Brand>
              <Search>
                <svg width="24" height="24" viewBox="0 0 24 24" fill="none" stroke="#333"><circle cx="9.300" cy="9" r="5.500" strokeWidth="2" /><path d="M13.300 13.500L20 20.500" strokeWidth="2.400" /></svg>
                <span>검색</span>
                <svg width="24" height="24" viewBox="0 0 24 24" fill="none" stroke="#4d545d" strokeWidth="1.900"><circle cx="12" cy="12" r="9.200" /><path d="M9 9.800Q9 7 12 7t3 2.600Q15 11 13.500 12 12 13 12 14.500" /><path d="M12 16v2" strokeWidth="2" /></svg>
              </Search>
              <Alerts>
                <svg width="24" height="24" viewBox="0 0 24 24" fill="#fff"><path d="M12 22c1.100 0 2-.9 2-2h-4c0 1.100.9 2 2 2zm6-6v-5c0-3.070-1.630-5.640-4.500-6.320V4a1.500 1.500 0 0 0-3 0v.68C7.640 5.360 6 7.920 6 11v5l-2 2v1h16v-1z" /></svg>
                <Badge>2</Badge>
              </Alerts>
              <Logout>
                <svg width="22" height="20" viewBox="0 0 22 20" fill="none" stroke="#fff" strokeWidth="2"><path d="M1 6V2.500Q1 1 2.500 1h17Q21 1 21 2.500v15Q21 19 19.500 19h-17Q1 19 1 17.500V14M0 10h13M9.500 6l4 4-4 4" /></svg>
                <span>로그아웃</span>
              </Logout>
            </Header>
            <Crumbs>
              <Crumb $w={80}>Jenkins</Crumb><Arrow $mr={16} />
              <Crumb $w={72}>Nodes</Crumb><Arrow $mr={0} />
            </Crumbs>
            <Body>
              <Side>
                {tasks.map(([Icon, t, latin], i) => (
                  <Task key={t} $on={i === 3} $latin={latin}><Icon /><span>{t}</span></Task>
                ))}
                <SideFoot />
              </Side>
              <Form>
                <Row><Label>Name</Label><Field>A</Field><Help /></Row>
                <Row><Label>Description</Label><Field /><Help /></Row>
                <Row><Label># of executors</Label><Field>1</Field><Help /></Row>
                <Row><Label>Remote root directory</Label><Field /><Help /></Row>
                <Row><Label>Labels</Label><Field /><Help /></Row>
                <Row><Label>Usage</Label><Field $select>Use this node as much as possible<Chevron /></Field><Help /></Row>
                <Row><Label>Launch method</Label><Field $select>Launch agents via SSH<Chevron /></Field><Help /></Row>
                <Row $nested $mt={17}><Label>Host</Label><Field /><Help /></Row>
                <Row $nested>
                  <Label>Credentials</Label>
                  <Inline>
                    <Field $select $w={250}><span /><Chevron /></Field>
                    <AddButton>
                      <svg width="16" height="16" viewBox="0 0 16 16"><ellipse cx="8" cy="12.500" rx="6" ry="1" fill="#e4e4e4" /><path d="M6 5.500h8.500v2.600h-3l-1 1-2-1H6z" fill="#7fa3d0" stroke="#48699b" strokeWidth=".6" /><circle cx="4" cy="7" r="3" fill="#4878b8" stroke="#2b548d" strokeWidth=".7" /><circle cx="12" cy="2.800" r="2" fill="#fffbc0" stroke="#f4e436" /></svg>
                      Add<i />
                    </AddButton>
                  </Inline>
                  <Help />
                </Row>
                <Row $nested><Label>Host Key Verification Strategy</Label><Field $select>Known hosts file Verification Strategy<Chevron /></Field><Help /></Row>
                <LoneHelp><Help /></LoneHelp>
                <Save>Save</Save>
              </Form>
            </Body>
          </Page>
          <Scroll>
            <svg width="8" height="5" viewBox="0 0 8 5"><path d="M4 0l4 5H0z" fill="#a3a3a3" /></svg>
            <Thumb />
            <svg width="8" height="5" viewBox="0 0 8 5"><path d="M4 5l4-5H0z" fill="#505050" /></svg>
          </Scroll>
        </Viewport>
        <Overlay width="1173" height="795" viewBox="0 0 1173 795">
          <filter id="rough" x="0" y="0" width="1173" height="795" filterUnits="userSpaceOnUse">
            <feTurbulence type="fractalNoise" baseFrequency="0.4" numOctaves="2" seed="4" />
            <feDisplacementMap in="SourceGraphic" scale="6" xChannelSelector="R" yChannelSelector="G" />
            <feGaussianBlur stdDeviation="0.6" />
          </filter>
          <g filter="url(#rough)" fill="#ed1c24">
            {scribbles.map((p) => <polygon key={p} points={p} />)}
          </g>
        </Overlay>
      </Window>
    </>
  );
}
